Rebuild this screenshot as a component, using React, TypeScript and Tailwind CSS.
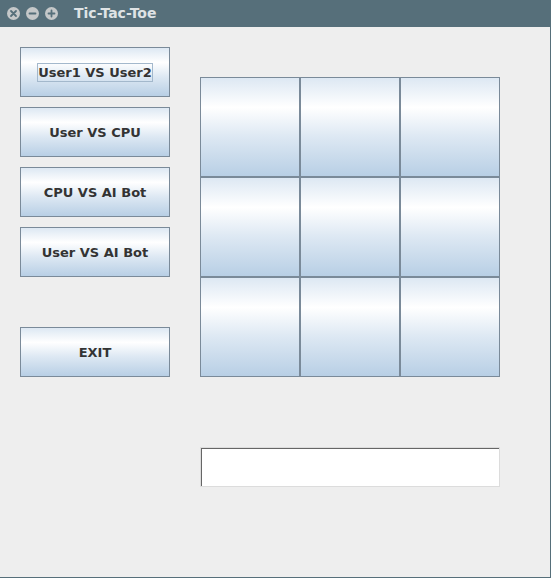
import React from "react";

const metal =
  "bg-[linear-gradient(to_bottom,#dde8f3_0%,#ffffff_30%,#dde8f3_60%,#b8cfe5_100%)]";

const modes = ["User1 VS User2", "User VS CPU", "CPU VS AI Bot", "User VS AI Bot"];

const WinButton = ({ label, focused }: { label: string; focused?: boolean }) => (
  <button
    className={`w-[150px] h-[50px] border border-[#7a8a99] ${metal} flex items-center justify-center text-[13px] font-bold text-[#333333]`}
    style={{ fontFamily: '"DejaVu Sans", sans-serif' }}
  >
    <span className={focused ? "border border-[#a3b8cc] leading-[17px]" : "leading-[17px]"}>
      {label}
    </span>
  </button>
);

const Circle = ({ children }: { children: React.ReactNode }) => (
  <div className="w-[13px] h-[13px] rounded-full bg-[#c5c8c9] flex items-center justify-center">
    <svg width="9" height="9" viewBox="0 0 9 9" stroke="#566f7a" strokeWidth="1.8" strokeLinecap="round">
      {children}
    </svg>
  </div>
);

export default function App() {
  return (
    <div className="w-[551px] h-[578px] bg-[#eeeeee] flex flex-col border-r border-b border-[#566f7a]">
      <div className="h-[27px] shrink-0 bg-[#566f7a] flex items-center pl-[7px]">
        <div className="flex gap-[6px] items-center">
          <Circle>
            <path d="M2 2 L7 7 M7 2 L2 7" />
          </Circle>
          <Circle>
            <path d="M1.5 4.5 H7.5" />
          </Circle>
          <Circle>
            <path d="M1.5 4.5 H7.5 M4.5 1.5 V7.5" />
          </Circle>
        </div>
        <span
          className="ml-[16px] text-[14px] font-bold text-[#dfe3e5]"
          style={{ fontFamily: '"DejaVu Sans", sans-serif' }}
        >
          Tic-Tac-Toe
        </span>
      </div>
      <div className="flex pl-[20px] pt-[20px] gap-[30px]">
        <div className="flex flex-col">
          <div className="flex flex-col gap-[10px]">
            {modes.map((m, i) => (
              <WinButton key={m} label={m} focused={i === 0} />
            ))}
          </div>
          <div className="mt-[50px]">
            <WinButton label="EXIT" />
          </div>
        </div>
        <div className="flex flex-col pt-[30px]">
          <div className="grid grid-cols-3 w-[300px]">
            {Array.from({ length: 9 }).map((_, i) => (
              <button key={i} className={`w-[100px] h-[100px] border border-[#7a8a99] ${metal}`} />
            ))}
          </div>
          <div className="mt-[70px] w-[300px] h-[40px] border border-[#dcdcdc] bg-white">
            <div className="w-full h-full border-t border-l border-[#666666]" />
          </div>
        </div>
      </div>
    </div>
  );
}
